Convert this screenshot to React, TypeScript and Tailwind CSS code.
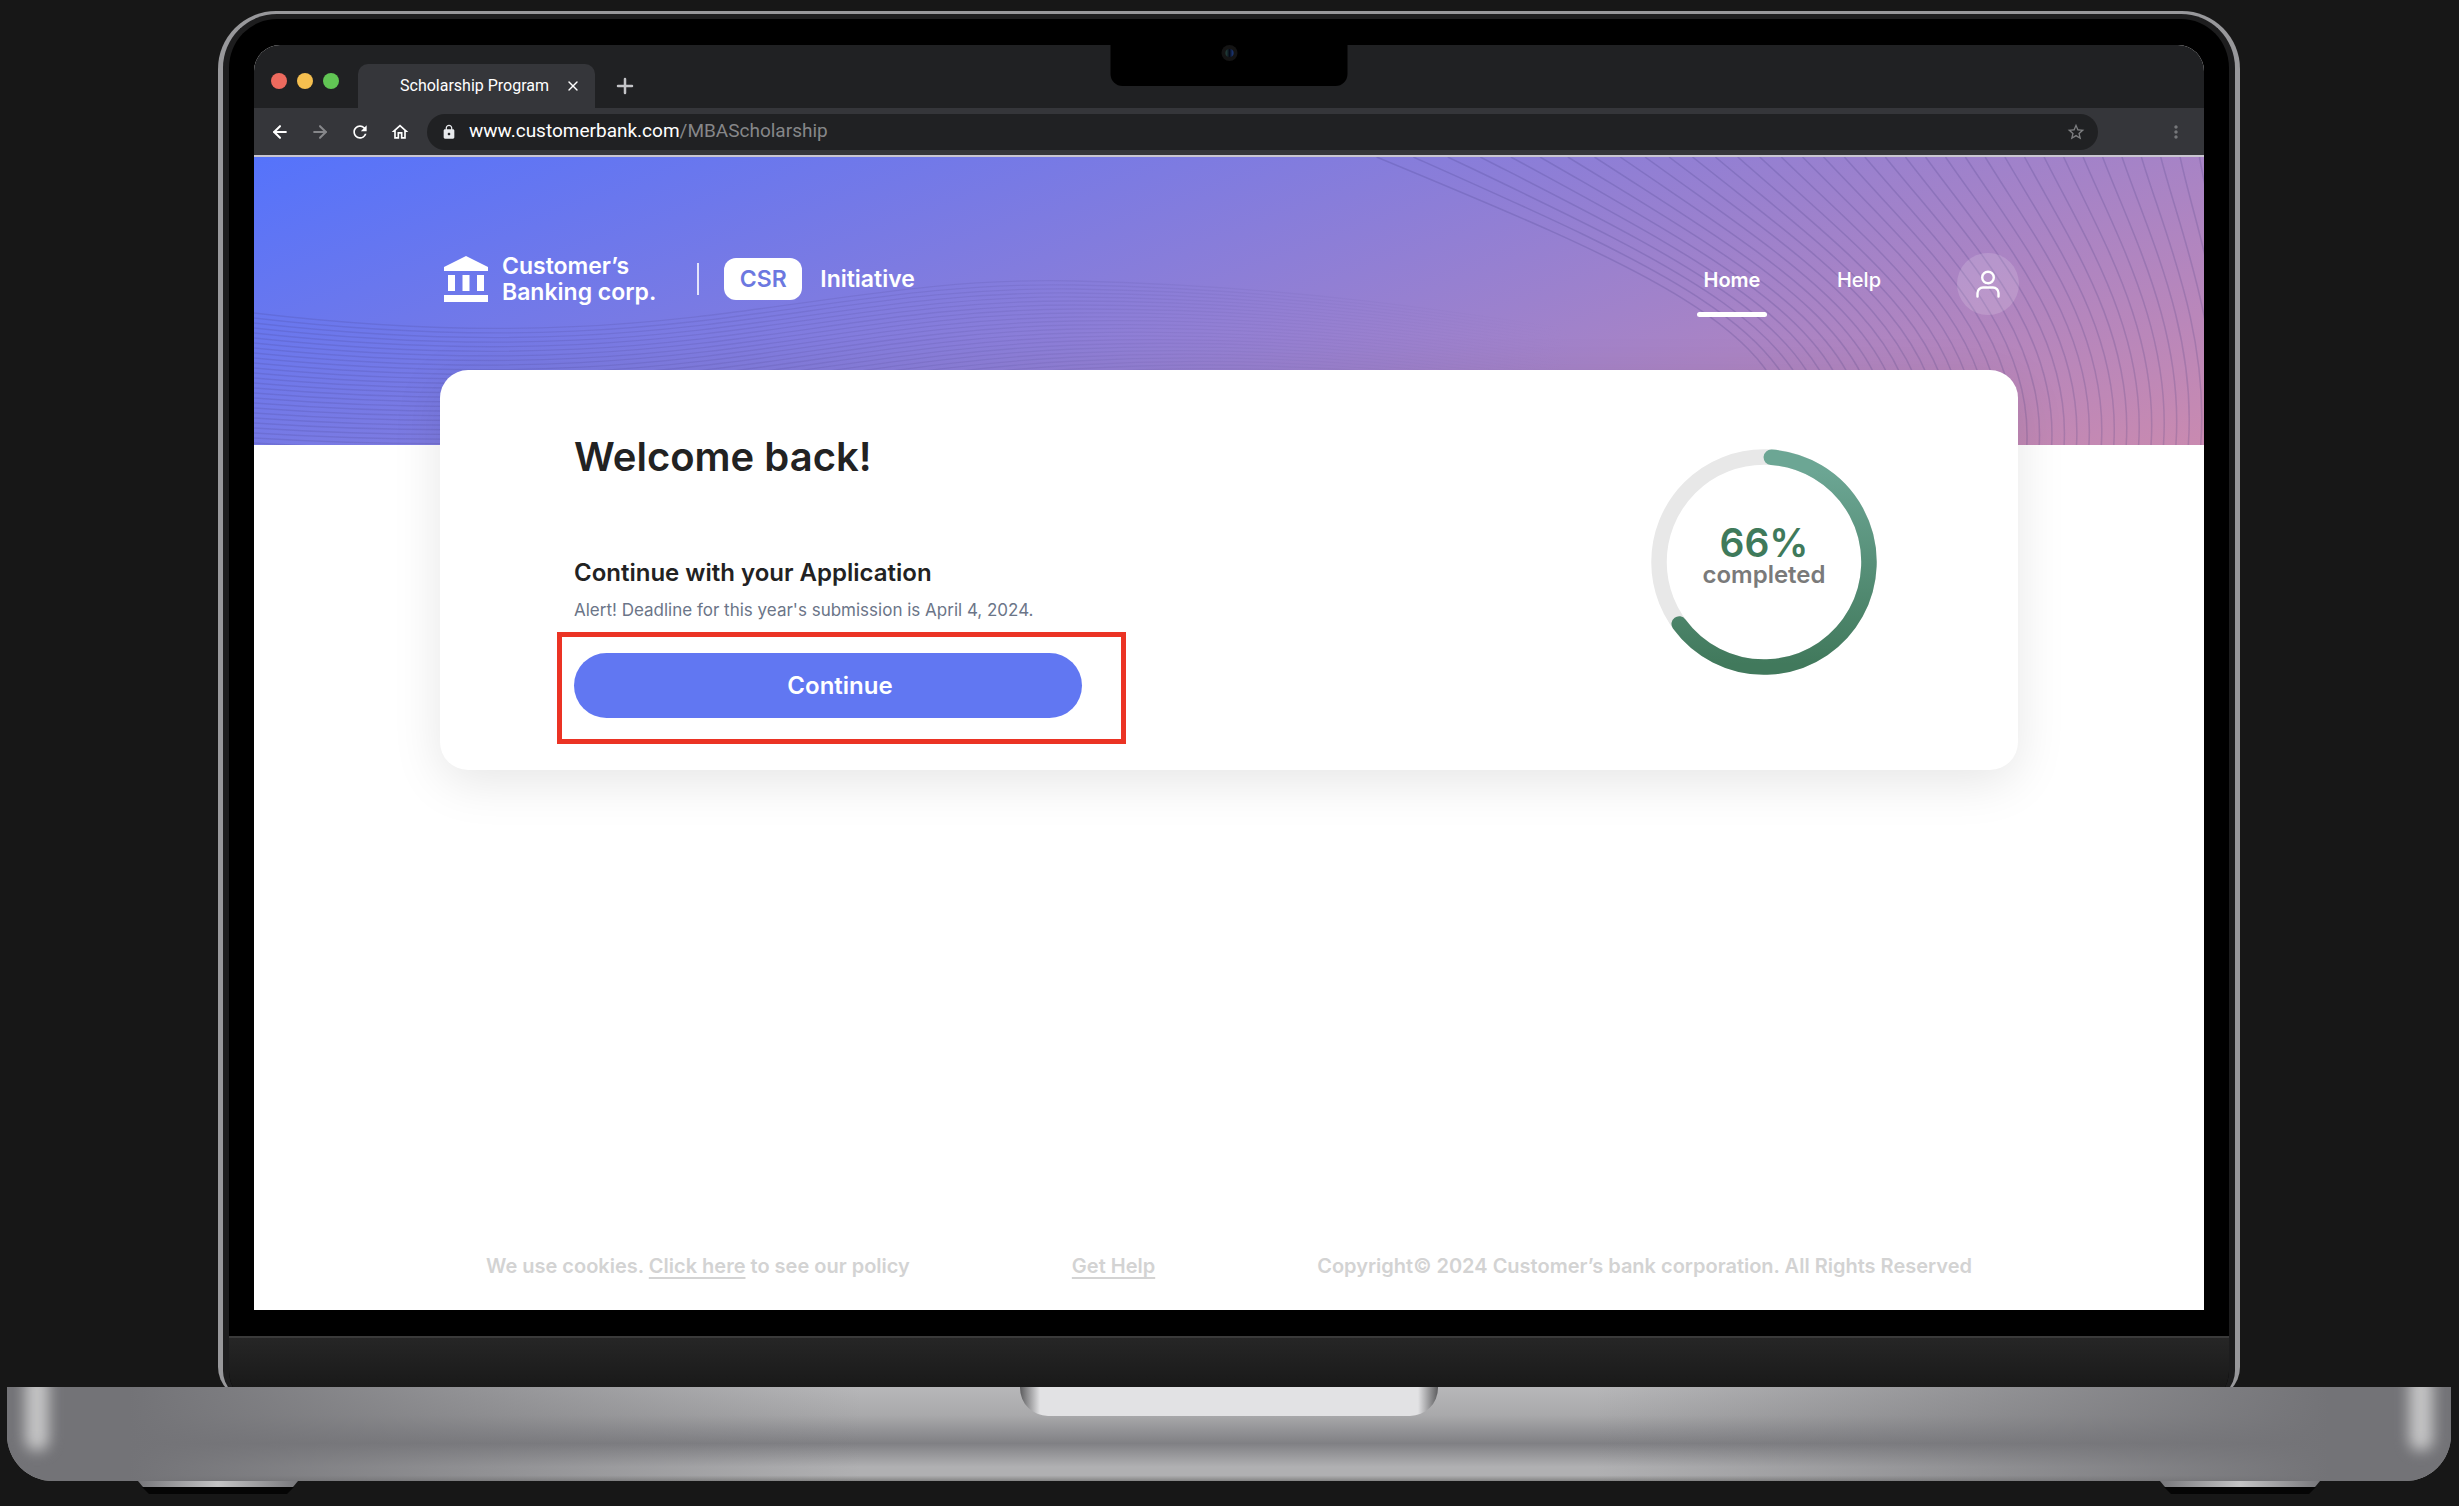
import React from "react";
import { ArrowLeft, ArrowRight, Plus, X } from "lucide-react";
import { MdLock, MdOutlineHome, MdRefresh, MdStarBorder, MdMoreVert } from "react-icons/md";

const PROGRESS = 66;

// Fan of curves in the top right corner of the hero
const fanLines = Array.from({ length: 37 }, (_, n) => {
  const k = n / 36;
  const top = 1122 + 19.2 * n + 132 * (1 - Math.exp(-n / 7));
  const c1x = 1383 + 574 * k;
  const c2x = 1538 + 454 * k;
  const end = 1536 + 447 * k;
  return `M${top} 0 C${c1x} ${108 - 35 * k} ${c2x} 173 ${end} 288`;
});

// Flat waves along the bottom of the hero
const waveLines = Array.from({ length: 30 }, (_, n) => {
  const left = 156 + 5 * n;
  return `M0 ${left} C420 ${left + 50 - n} 560 ${118 + 5 * n} 820 ${124 + 4 * n} S1260 ${165 + 3 * n} 1400 ${185 + 3 * n}`;
});

function BankIcon() {
  return (
    <svg viewBox="0 0 44 46" className="h-[46px] w-11 fill-white" aria-hidden="true">
      <path d="M22 0 44 11v4H0v-4zM4 19h7v16H4zM18.500 19h7v16h-7zM33 19h7v16h-7zM0 39h44v7H0z" />
    </svg>
  );
}

function UserIcon() {
  return (
    <svg viewBox="0 0 24 28" className="h-7 w-6 fill-none stroke-white" strokeWidth="2.400" strokeLinecap="round" aria-hidden="true">
      <circle cx="12" cy="7.500" r="5.800" />
      <path d="M1.500 26.500v-3.500a5.500 5.500 0 0 1 5.500-5.500h10a5.500 5.500 0 0 1 5.500 5.500v3.500" />
    </svg>
  );
}

function HeroBackground() {
  return (
    <svg viewBox="0 0 1949 288" preserveAspectRatio="none" className="absolute inset-0 h-full w-full fill-none" aria-hidden="true">
      <defs>
        <linearGradient id="wave" gradientUnits="userSpaceOnUse" x1="0" y1="0" x2="1400" y2="0">
          <stop offset="0" stopColor="#3c3478" stopOpacity="0.160" />
          <stop offset="0.500" stopColor="#3c3478" stopOpacity="0.120" />
          <stop offset="0.950" stopColor="#3c3478" stopOpacity="0" />
        </linearGradient>
      </defs>
      <g stroke="#3c3478" strokeOpacity="0.190" strokeWidth="1.500">
        {fanLines.map((d, i) => (
          <path key={i} d={d} />
        ))}
      </g>
      <g stroke="url(#wave)" strokeWidth="1.300">
        {waveLines.map((d, i) => (
          <path key={i} d={d} />
        ))}
      </g>
    </svg>
  );
}

function BrowserChrome() {
  return (
    <div className="font-[Roboto,sans-serif]">
      <div className="relative flex h-[63px] items-end bg-[#202123] pl-[17px]">
        <div className="flex gap-[10px] pb-[19px]">
          <span className="size-4 rounded-full bg-[#ed6a5e]" />
          <span className="size-4 rounded-full bg-[#f5bf4f]" />
          <span className="size-4 rounded-full bg-[#61c554]" />
        </div>
        <div className="ml-[19px] flex h-11 w-[237px] items-center justify-between rounded-t-[10px] bg-[#35363a] pr-3.5 pl-[42px] text-white">
          <span className="text-base whitespace-nowrap">Scholarship Program</span>
          <button type="button" aria-label="Close tab">
            <X size={16} />
          </button>
        </div>
        <button type="button" aria-label="New tab" className="mb-2.5 ml-[18px] text-[#c3c4c7]">
          <Plus size={24} strokeWidth={2.5} />
        </button>
        {/* Camera notch */}
        <div className="absolute top-0 left-1/2 flex h-[41px] w-[237px] -translate-x-1/2 justify-center rounded-b-[12px] bg-black">
          <span className="flex size-4 items-center justify-center rounded-full bg-[#141414]">
            <span className="size-2 rounded-full bg-[linear-gradient(90deg,#27463f,#050a18_50%,#1f3f86)]" />
          </span>
        </div>
      </div>
      <div className="flex h-[47px] items-center bg-[#35363a] pr-[18px] pl-4 text-white">
        <div className="flex gap-5">
          <button type="button" aria-label="Back"><ArrowLeft size={20} strokeWidth={2.5} /></button>
          <button type="button" aria-label="Forward" className="text-[#86878a]"><ArrowRight size={20} strokeWidth={2.5} /></button>
          <button type="button" aria-label="Reload"><MdRefresh size={20} /></button>
          <button type="button" aria-label="Home"><MdOutlineHome size={20} /></button>
        </div>
        <div className="ml-[17px] flex h-9 flex-1 items-center rounded-full bg-[#202123] pr-3 pl-3.5">
          <MdLock size={16} className="text-[#e8eaed]" />
          <span className="ml-3 flex-1 text-[19px]">
            www.customerbank.com<span className="text-[#868789]">/MBAScholarship</span>
          </span>
          <button type="button" aria-label="Bookmark" className="text-[#7d7e80]"><MdStarBorder size={20} /></button>
        </div>
        <button type="button" aria-label="Menu" className="ml-[68px] text-[#76777a]"><MdMoreVert size={20} /></button>
      </div>
    </div>
  );
}

function Header() {
  return (
    <header className="relative h-72 bg-[linear-gradient(160deg,#5573fb,#c98ab0)] pt-24 pr-[185px] pl-[190px] text-white">
      <HeroBackground />
      <div className="relative flex items-start justify-between">
        <div className="flex items-center">
          <BankIcon />
          <p className="ml-[14px] text-[23px] leading-[26px] font-semibold">
            Customer’s
            <br />
            Banking corp.
          </p>
          <span className="ml-[41px] h-8 w-0.5 bg-white/80" />
          <span className="ml-[25px] flex h-[42px] w-[78px] items-center justify-center rounded-xl bg-white text-[23px] font-semibold text-[#6c78e0]">
            CSR
          </span>
          <span className="ml-[18px] text-[23px] font-semibold">Initiative</span>
        </div>
        <nav className="flex items-start text-xl">
          <a href="#home" className="mt-[13px] flex w-[70px] flex-col items-center gap-[18px] font-semibold">
            Home
            <span className="h-[5px] w-full rounded-full bg-white" />
          </a>
          <a href="#help" className="mt-[13px] ml-[70px] font-medium">Help</a>
          <button type="button" aria-label="Account" className="ml-[76px] flex size-[62px] items-center justify-center rounded-full bg-white/15">
            <UserIcon />
          </button>
        </nav>
      </div>
    </header>
  );
}

function ProgressRing() {
  return (
    <div className="relative size-[226px]">
      <svg viewBox="0 0 226 226" className="size-full fill-none" strokeWidth="15.500" aria-hidden="true">
        <defs>
          <linearGradient id="ring" gradientUnits="userSpaceOnUse" x1="113" y1="20" x2="113" y2="215">
            <stop offset="0" stopColor="#6ca694" />
            <stop offset="1" stopColor="#41795c" />
          </linearGradient>
        </defs>
        <circle cx="113" cy="113" r="105" stroke="#e8e8e8" />
        <path d="M120.300 8.300A105 105 0 1 1 28.200 175" stroke="url(#ring)" strokeLinecap="round" />
      </svg>
      <div className="absolute inset-0 flex flex-col items-center pt-[76px] font-semibold">
        <span className="text-[39px] leading-9 text-[#3f7a5b]">{PROGRESS}%</span>
        <span className="text-2xl leading-7 text-[#7a7a7a]">completed</span>
      </div>
    </div>
  );
}

function WelcomeCard() {
  return (
    <section className="relative mx-[186px] -mt-[75px] flex items-start justify-between rounded-[28px] bg-white pt-[63px] pr-[141px] pb-[26px] pl-[134px] shadow-[0_12px_50px_rgba(0,0,0,0.1)]">
      <div>
        <h1 className="text-[40px] leading-[48px] font-semibold text-[#222]">Welcome back!</h1>
        <h2 className="mt-[78px] text-2xl leading-7 font-semibold text-[#222]">Continue with your Application</h2>
        <p className="mt-[9px] text-[17px] leading-7 text-[#6b7588]">Alert! Deadline for this year's submission is April 4, 2024.</p>
        <div className="mt-2 -ml-[17px] border-[5px] border-[#eb3324] pt-4 pr-[39px] pb-[21px] pl-3">
          <button type="button" className="h-[65px] w-[508px] rounded-full bg-[#6177f2] pl-6 text-2xl font-semibold text-white">
            Continue
          </button>
        </div>
      </div>
      <div className="mt-4">
        <ProgressRing />
      </div>
    </section>
  );
}

function Footer() {
  return (
    <footer className="mt-[482px] flex justify-between px-[232px] pb-[30px] text-xl leading-7 font-semibold text-[#d3d3d3]">
      <p>
        We use cookies. <a href="#cookies" className="underline underline-offset-4">Click here</a> to see our policy
      </p>
      <a href="#help" className="underline underline-offset-4">Get Help</a>
      <p>Copyright© 2024 Customer’s bank corporation. All Rights Reserved</p>
    </footer>
  );
}

function LaptopBase() {
  return (
    <div className="relative mr-2 ml-[7px]">
      <div className="relative flex h-[94px] justify-center overflow-hidden rounded-b-[46px] bg-[linear-gradient(180deg,#b7b7b9,#a9a9ab_30%,#808084_60%,#b0b0b2_85%,#b0b0b2_94%,#858585)]">
        <div className="absolute inset-0 bg-[linear-gradient(90deg,#737377,#737377_5%,transparent_35%,transparent_65%,#737377_95%,#737377)]" />
        <span className="absolute -top-4 left-[18px] h-20 w-6 rounded-full bg-[#c4c4c5] blur-[7px]" />
        <span className="absolute -top-4 right-[18px] h-20 w-6 rounded-full bg-[#c4c4c5] blur-[7px]" />
        <div className="relative h-[29px] w-[418px] rounded-b-[28px] bg-[linear-gradient(90deg,#5c5c5e,#e2e2e4_20px,#e2e2e4_398px,#5c5c5e)]" />
      </div>
      <div className="flex justify-between px-[131px]">
        <Foot />
        <Foot />
      </div>
    </div>
  );
}

function Foot() {
  return (
    <svg viewBox="0 0 160 13" className="h-[13px] w-40" aria-hidden="true">
      <defs>
        <linearGradient id="foot">
          <stop offset="0" stopColor="#77777b" />
          <stop offset="0.500" stopColor="#c4c4c5" />
          <stop offset="1" stopColor="#77777b" />
        </linearGradient>
      </defs>
      <path d="M0 0h160l-5 6H5z" fill="url(#foot)" />
      <path d="M4 6h152l-7 7H11z" fill="#050505" />
    </svg>
  );
}

export default function App() {
  return (
    <div className="min-h-screen bg-[#171717] pt-[11px] pb-3 font-[Inter,sans-serif]">
      {/* Lid, its bottom edge tucked behind the base */}
      <div className="mr-[219px] -mb-3 ml-[218px] rounded-t-[58px] rounded-b-[32px] bg-[#98989b] px-[5px] pt-[3px]">
        <div className="overflow-hidden rounded-t-[54px] rounded-b-[28px] border-x-[6px] border-t-[5px] border-[#1d1d1e] bg-black">
          <div className="px-[25px] py-[26px]">
            <div className="overflow-hidden rounded-t-[26px] bg-white">
              <BrowserChrome />
              <div className="border-t-2 border-[#c9c6d0]">
                <Header />
                <main>
                  <WelcomeCard />
                </main>
                <Footer />
              </div>
            </div>
          </div>
          <div className="h-[63px] border-t-2 border-[#3a3a3a] bg-[linear-gradient(180deg,#262626,#161616)]" />
        </div>
      </div>
      <LaptopBase />
    </div>
  );
}
